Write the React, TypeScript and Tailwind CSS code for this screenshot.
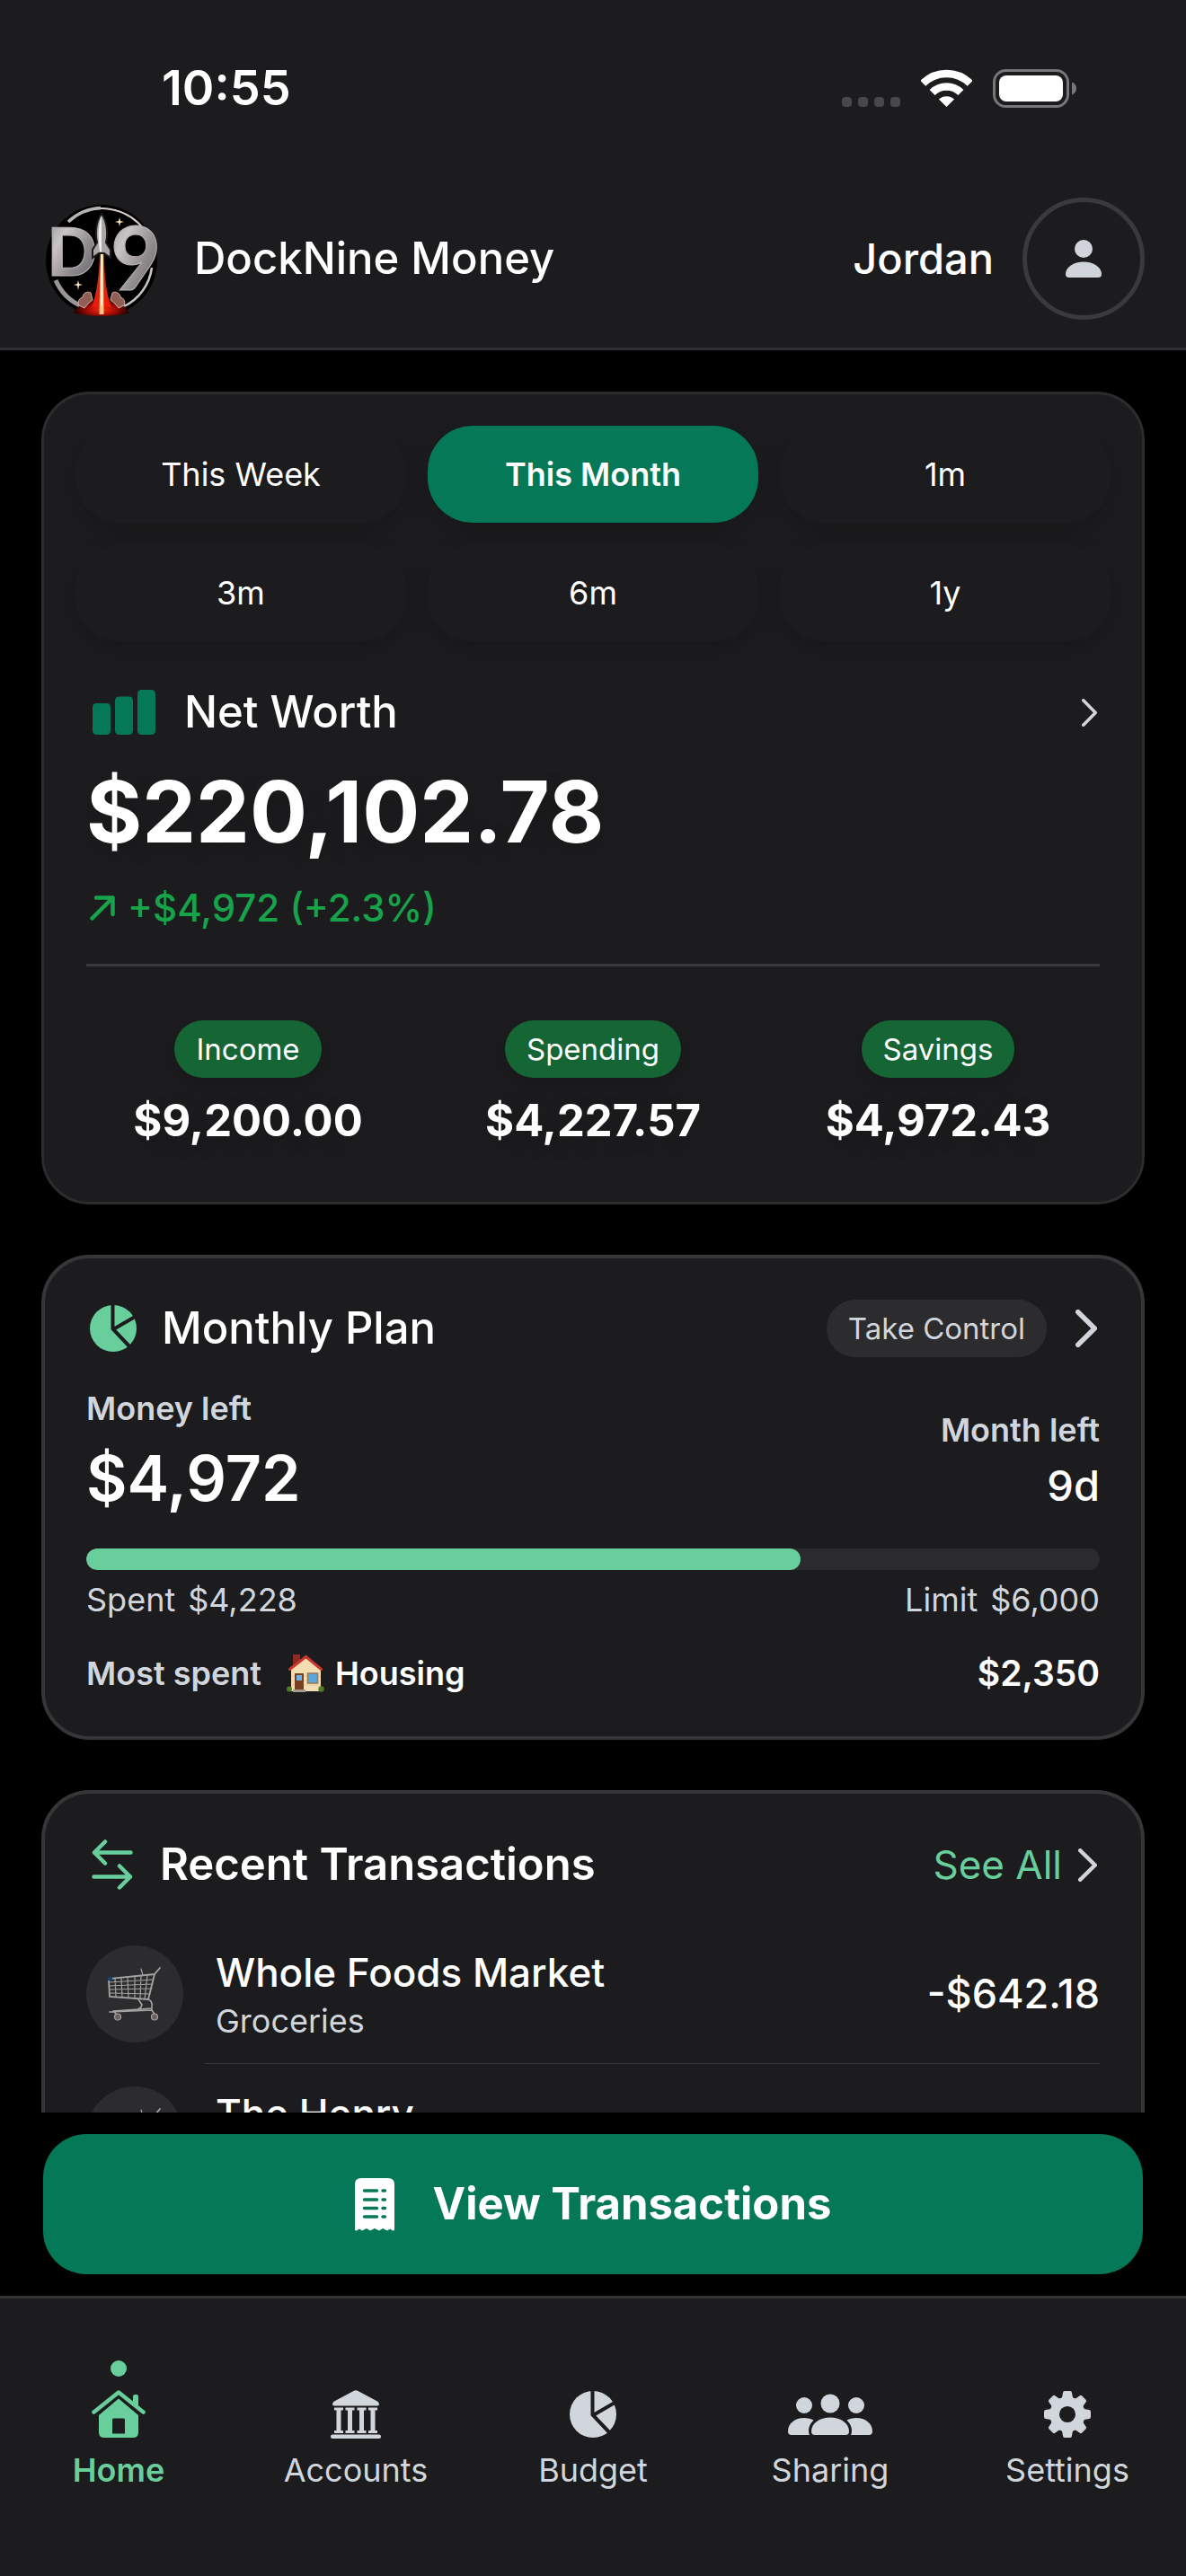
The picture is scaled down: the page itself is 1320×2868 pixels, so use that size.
import React, { useState } from 'react';

interface IconProps {
  className?: string;
}

interface Transaction {
  name: string;
  category?: string;
  amount?: string;
}

const WifiIcon: React.FC = () => (
  <svg width="57" height="43" viewBox="0 0 57 43" fill="none" stroke="#fff">
    <path d="M2.3 15.8A37 37 0 0 1 54.7 15.8" strokeWidth="8.5" />
    <path d="M12.6 26.1A22.5 22.5 0 0 1 44.4 26.1" strokeWidth="8.5" />
    <path d="M28.5 42L19.9 33.6A12.5 12.5 0 0 1 37.1 33.6Z" fill="#fff" stroke="none" />
  </svg>
);

const BatteryIcon: React.FC = () => (
  <svg width="93" height="43" viewBox="0 0 93 43" fill="none">
    <rect x="1.5" y="1.5" width="82" height="40" rx="13" stroke="#77777a" strokeWidth="3" />
    <rect x="7" y="7" width="71" height="29" rx="8" fill="#fff" />
    <path d="M88 14.5C91 15.5 93 18 93 21.5S91 27.5 88 28.5Z" fill="#77777a" />
  </svg>
);

const Logo: React.FC = () => (
  <svg width="132" height="132" viewBox="0 0 132 132" role="img" aria-label="DockNine logo">
    <defs>
      <linearGradient id="steel" x1="0" y1="0" x2="1" y2="1">
        <stop offset="0" stopColor="#8d8b8e" />
        <stop offset="0.3" stopColor="#c9c5c7" />
        <stop offset="0.6" stopColor="#8f8b8e" />
        <stop offset="1" stopColor="#5b585c" />
      </linearGradient>
      <linearGradient id="flame" x1="0" y1="0" x2="0" y2="1">
        <stop offset="0" stopColor="#5a1c12" />
        <stop offset="0.5" stopColor="#c92c14" />
        <stop offset="1" stopColor="#f01808" />
      </linearGradient>
      <radialGradient id="glow" cx="0.5" cy="0.7" r="0.5">
        <stop offset="0" stopColor="#ff2a0c" />
        <stop offset="0.5" stopColor="#a80c04" />
        <stop offset="1" stopColor="#200000" />
      </radialGradient>
    </defs>
    <circle cx="65" cy="68" r="62" fill="#000" />
    <path d="M28 24A58 58 0 0 1 114 36" fill="none" stroke="#d8d0cc" strokeWidth="2" />
    <path d="M28 25A57 57 0 0 1 64 9.500" fill="none" stroke="#b8b3b3" strokeWidth="3.500" />
    <path d="M14 90A56 56 0 0 0 43 119" fill="none" stroke="#9a9698" strokeWidth="5" />
    <path d="M121 76A56 56 0 0 1 90 119" fill="none" stroke="#c9c4c4" strokeWidth="2.500" />
    <text x="5" y="85" fontFamily="'Liberation Sans', sans-serif" fontWeight="700" fontSize="77" fill="url(#steel)" stroke="#b9b4b4" strokeWidth="1">D</text>
    <text x="75" y="101" fontFamily="Lato, sans-serif" fontWeight="700" fontSize="97" fill="url(#steel)" stroke="#b9b4b4" strokeWidth="1">9</text>
    <path d="M59 60C60 90 52 112 40 126H91C78 112 71 90 72 60Z" fill="#000" />
    <path d="M34 126C45 110 56 116 65 106C74 116 85 110 96 126C86 131 44 131 34 126Z" fill="url(#glow)" />
    <path d="M63 58C62 86 60 104 54 120H76C70 104 68 86 68 58Z" fill="url(#flame)" />
    <path d="M40 118a6 6 0 0 1 4-9a6 6 0 0 1 9-5l2 8-5 4-4 5ZM90 118a6 6 0 0 0-4-9a6 6 0 0 0-9-5l-2 8 5 4 4 5Z" fill="#8f5f55" stroke="#d6b0a4" strokeWidth="1" />
    <path d="M64 58H67L67.500 128H62.500Z" fill="#ffc58a" />
    <path d="M64.500 55H66V118H64.500Z" fill="#fff" />
    <path d="M65 16C58 26 58 40 60 48L55 56V65L62 60H68L75 65V56L70 48C72 40 72 26 65 16Z" fill="#aaa6a8" stroke="#1c1a1c" strokeWidth="2" />
    <path d="M65 18C61 28 61 44 63 58H65Z" fill="#efecec" />
    <path d="M85 20L86 24L90 25L86 26L85 30L84 26L80 25L84 24ZM39 90L40 94L44 95L40 96L39 101L38 96L34 95L38 94Z" fill="#ffe2c4" />
  </svg>
);

const PersonIcon: React.FC = () => (
  <svg width="40" height="42" viewBox="0 0 40 42" fill="#d1d5db">
    <circle cx="20" cy="10" r="10" />
    <path d="M0 38C0 30.500 9 24.500 20 24.500S40 30.500 40 38C40 41 38.500 42 36 42H4C1.500 42 0 41 0 38Z" />
  </svg>
);

const BarsIcon: React.FC = () => (
  <svg width="70" height="50" viewBox="0 0 70 50" fill="#047857">
    <rect x="0" y="15" width="20" height="35" rx="4.500" />
    <rect x="25" y="7.500" width="20" height="42.500" rx="4.500" />
    <rect x="50" y="0" width="20" height="50" rx="4.500" />
  </svg>
);

const TrendIcon: React.FC = () => (
  <svg width="28" height="28" viewBox="0 0 28 28" fill="none" stroke="#16a34a" strokeWidth="4.500" strokeLinecap="round" strokeLinejoin="round">
    <path d="M2.500 25.500L25.500 2.500M7 2.500H25.500V21" />
  </svg>
);

const PieIcon: React.FC<IconProps> = ({ className }) => (
  <svg width="52" height="52" viewBox="0 0 52 52" className={className}>
    <circle cx="26" cy="26" r="26" fill="currentColor" />
    <path d="M25.500 0V26.500L45 47M27 26.500L52 12" fill="none" stroke="#1c1c1e" strokeWidth="4" />
  </svg>
);

const SwapIcon: React.FC = () => (
  <svg width="46" height="56" viewBox="0 0 46 56" fill="none" stroke="#68ce9b" strokeWidth="4.500" strokeLinecap="round" strokeLinejoin="round">
    <path d="M43.500 14.500H3M15 2.500L3 14.500L15 26.500M2.500 41.500H43M31 29.500L43 41.500L31 53.500" />
  </svg>
);

const ReceiptIcon: React.FC = () => (
  <svg width="44" height="59" viewBox="0 0 44 59">
    <path d="M0 7Q0 0 7 0H37Q44 0 44 7V57Q44 59 42 58.500L39 56.500L36 58.500L31 56L27 58.500L22 56L17 58.500L13 56L8 58.500L5 56.500L2 58.500Q0 59 0 57Z" fill="#fff" />
    <path d="M10.500 14H24.500M10.500 24H24.500M10.500 33.500H24.500M10.500 43H24.500M31 14H33.500M31 24H33.500M31 33.500H33.500M31 43H33.500" stroke="#047857" strokeWidth="3.500" strokeLinecap="round" />
  </svg>
);

const Chevron: React.FC<{ width: number; height: number; stroke: number }> = ({ width, height, stroke }) => (
  <svg width={width} height={height} fill="none" stroke="#d1d5db" strokeWidth={stroke} strokeLinecap="round" strokeLinejoin="round">
    <path d={`M${stroke / 2} ${stroke / 2}L${width - stroke / 2} ${height / 2}L${stroke / 2} ${height - stroke / 2}`} />
  </svg>
);

const HouseEmoji: React.FC = () => (
  <svg width="42" height="42" viewBox="0 0 42 42">
    <rect x="7" y="0" width="8" height="12" fill="#8f2a20" />
    <path d="M5 16L21 3L38 16V41H5Z" fill="#f3deb4" />
    <path d="M5 24H38M5 29H38M5 34H38" stroke="#e2c998" strokeWidth="0.800" />
    <path d="M3.500 16.500L21.500 2.500L38.500 16.500" fill="none" stroke="#c9362c" strokeWidth="3" strokeLinecap="round" />
    <rect x="9" y="21" width="10" height="19" fill="#7a3f22" />
    <rect x="11" y="23" width="6" height="6" fill="#6db5e8" />
    <rect x="23.500" y="21" width="11" height="11" fill="#5aa7e0" stroke="#9b7a58" strokeWidth="1.600" />
    <rect x="7" y="39" width="14" height="3" fill="#a59a8e" />
    <circle cx="3" cy="38.500" r="3" fill="#4f7d26" />
    <circle cx="38.500" cy="38.500" r="3.200" fill="#4f7d26" />
  </svg>
);

const CartEmoji: React.FC = () => (
  <svg width="60" height="60" viewBox="0 0 60 60" fill="none" stroke="#a3a3a3" strokeWidth="1.200" strokeLinecap="round">
    <path d="M58 1L52 8L45 36L2 33L1 13L52 8" strokeWidth="1.800" />
    <path d="M1 17L51 14M1 21L50 19M2 25L49 24M2 29L47 30M8 12L9 33M15 12L16 34M22 11L23 34M30 11L30 35M37 10L36 35M44 9L41 36M37 2L39 9" />
    <path d="M34 36L38 42Q37 47 30 48M45 36Q50 38 49 44V48L2 50M6 49L49 46M49 48L53 54M7 50L11 54" strokeWidth="1.600" />
    <rect x="0" y="11" width="5" height="4" fill="#1d4168" stroke="none" />
    <circle cx="11" cy="55.500" r="3.500" fill="#6b625c" />
    <circle cx="52" cy="55.500" r="3.500" fill="#6b625c" />
  </svg>
);

const HomeIcon: React.FC = () => (
  <svg width="60" height="54" viewBox="0 0 60 54" fill="currentColor">
    <path d="M2.500 24.500L30 2.500L57.500 24.500" fill="none" stroke="currentColor" strokeWidth="4.500" strokeLinecap="round" strokeLinejoin="round" />
    <path d="M46 14V7Q46 5 48 5H50Q52 5 52 7V20Z" />
    <path fillRule="evenodd" d="M30 9.500L52 28V47Q52 53 46 53H14Q8 53 8 47V28ZM23 33V48.500H37V33Q37 31.500 35.500 31.500H24.500Q23 31.500 23 33Z" />
  </svg>
);

const BankIcon: React.FC = () => (
  <svg width="56" height="54" viewBox="0 0 56 54" fill="currentColor">
    <path d="M26 0.800Q28 -0.400 30 0.800L52 12.500Q54 14 54 15.500Q54 17.500 52 17.500H4Q2 17.500 2 15.500Q2 14 4 12.500Z" />
    {[9, 21.5, 34.5, 47].map((x) => (
      <path key={x} d={`M${x - 5} 19.500H${x + 5}V22.500H${x + 2.5}V45H${x + 5}V48H${x - 5}V45H${x - 2.5}V22.500H${x - 5}Z`} />
    ))}
    <rect x="0" y="49.500" width="56" height="4.500" rx="2" />
  </svg>
);

const PeopleIcon: React.FC = () => (
  <svg width="94" height="46" viewBox="0 0 94 46" fill="currentColor">
    <circle cx="47" cy="11" r="10.500" />
    <circle cx="18" cy="13" r="9" />
    <circle cx="76" cy="13" r="9" />
    <path d="M0 42C0 33 8 27 18 27C22 27 26 28 28.500 29.500C25 33 23 37 23 41Q23 44 24 46H4Q0 46 0 42ZM94 42C94 33 86 27 76 27C72 27 68 28 65.500 29.500C69 33 71 37 71 41Q71 44 70 46H90Q94 46 94 42Z" />
    <path d="M26 42C26 33 35 26.500 47 26.500S68 33 68 42Q68 46 64 46H30Q26 46 26 42Z" />
  </svg>
);

const GearIcon: React.FC = () => (
  <svg width="52" height="52" viewBox="-26 -26 52 52" fill="currentColor">
    {[0, 45, 90, 135, 180, 225, 270, 315].map((angle) => (
      <path key={angle} transform={`rotate(${angle})`} d="M-7 -17Q-5.500 -19 -5 -24Q-4.800 -26 -3 -26H3Q4.800 -26 5 -24Q5.500 -19 7 -17Z" />
    ))}
    <circle r="14.300" fill="none" stroke="currentColor" strokeWidth="10.500" />
  </svg>
);

const ranges = ['This Week', 'This Month', '1m', '3m', '6m', '1y'];

const stats = [
  { label: 'Income', value: '$9,200.00' },
  { label: 'Spending', value: '$4,227.57' },
  { label: 'Savings', value: '$4,972.43' },
];

const transactions: Transaction[] = [
  { name: 'Whole Foods Market', category: 'Groceries', amount: '-$642.18' },
  { name: 'The Henry' },
];

const tabs = [
  { label: 'Home', icon: <HomeIcon /> },
  { label: 'Accounts', icon: <BankIcon /> },
  { label: 'Budget', icon: <PieIcon /> },
  { label: 'Sharing', icon: <PeopleIcon /> },
  { label: 'Settings', icon: <GearIcon /> },
];

const StatusBar: React.FC = () => (
  <div className="flex h-[196px] items-center justify-between pr-[122px] pl-[180px]">
    <span className="text-[54px] leading-[60px] font-semibold">10:55</span>
    <div className="flex items-end gap-[23px]">
      <div className="flex gap-[7px] pb-px">
        {[0, 1, 2, 3].map((dot) => (
          <span key={dot} className="h-[11px] w-[11px] rounded-[4px] bg-[#48484a]" />
        ))}
      </div>
      <WifiIcon />
      <BatteryIcon />
    </div>
  </div>
);

const Header: React.FC = () => (
  <header className="border-b-[3px] border-[#303032] bg-[#1c1c1e]">
    <StatusBar />
    <div className="flex items-center justify-between pt-6 pr-[46px] pb-[31px] pl-12">
      <div className="flex items-center gap-9">
        <Logo />
        <h1 className="text-[49px] leading-[60px] font-medium">DockNine Money</h1>
      </div>
      <div className="flex items-center gap-8">
        <span className="text-[47px] leading-[60px] font-medium">Jordan</span>
        <button aria-label="Profile" className="flex h-[136px] w-[136px] items-center justify-center rounded-full border-[5px] border-[#3a3a3c]">
          <PersonIcon />
        </button>
      </div>
    </div>
  </header>
);

const NetWorthCard: React.FC = () => {
  const [range, setRange] = useState('This Month');

  return (
    <section className="rounded-[54px] border-[3px] border-[#2c2c2e] bg-[#1c1c1e] px-[35px] pt-[35px] pb-[60px]">
      <div className="grid grid-cols-3 gap-6">
        {ranges.map((item) => (
          <button
            key={item}
            onClick={() => setRange(item)}
            className={`h-[108px] rounded-[50px] text-[36px] leading-[44px] shadow-[0_8px_24px_rgba(0,0,0,0.16)] ${
              item === range ? 'bg-[#047857] font-semibold' : 'bg-[#1c1c1e]'
            }`}
          >
            {item}
          </button>
        ))}
      </div>
      <div className="px-3">
        <div className="mt-[49px] flex items-center justify-between pr-[3px] pl-[7px]">
          <div className="flex items-center gap-8">
            <BarsIcon />
            <h2 className="text-[49px] leading-[60px] font-medium">Net Worth</h2>
          </div>
          <Chevron width={17} height={31} stroke={3.5} />
        </div>
        <p className="mt-[31px] text-[95px] leading-[100px] font-bold [text-shadow:0_8px_24px_rgba(0,0,0,0.16)]">$220,102.78</p>
        <div className="mt-[33px] flex items-center gap-[14px] pl-1">
          <TrendIcon />
          <span className="text-[42px] leading-[48px] font-medium text-[#16a34a]">+$4,972 (+2.3%)</span>
        </div>
        <div className="mt-[38px] h-[3px] bg-[#3a3a3c]" />
        <div className="mt-[60px] grid grid-cols-3 gap-6">
          {stats.map(({ label, value }) => (
            <div key={label} className="flex flex-col items-center">
              <span className="rounded-[32px] bg-[#166534] px-6 text-[33px] leading-[64px] shadow-[0_8px_24px_rgba(0,0,0,0.16)]">{label}</span>
              <span className="mt-[18px] text-[49px] leading-[60px] font-bold [text-shadow:0_8px_24px_rgba(0,0,0,0.16)]">{value}</span>
            </div>
          ))}
        </div>
      </div>
    </section>
  );
};

const MonthlyPlanCard: React.FC = () => {
  const spent = 4228;
  const limit = 6000;

  return (
    <section className="rounded-[54px] border-4 border-[#363638] bg-[#1c1c1e] px-[46px] pt-[46px] pb-12">
      <div className="flex items-center justify-between pr-[3px] pl-1">
        <div className="flex items-center gap-7">
          <PieIcon className="text-[#68ce9b]" />
          <h2 className="text-[49px] leading-[60px] font-medium">Monthly Plan</h2>
        </div>
        <div className="flex items-center gap-8">
          <button className="rounded-[32px] bg-[#2c2c2e] px-6 text-[33px] leading-[64px] text-gray-300">Take Control</button>
          <Chevron width={24} height={42} stroke={5.5} />
        </div>
      </div>
      <div className="mt-[35px] flex items-end justify-between">
        <div>
          <p className="text-[36px] leading-[44px] font-semibold text-gray-300">Money left</p>
          <p className="mt-4 text-[70px] leading-[80px] font-semibold">$4,972</p>
        </div>
        <div className="text-right">
          <p className="text-[36px] leading-[44px] font-semibold text-gray-300">Month left</p>
          <p className="mt-2 text-[47px] leading-[64px] font-medium">9d</p>
        </div>
      </div>
      <div
        role="progressbar"
        aria-label="Monthly spending"
        aria-valuenow={spent}
        aria-valuemax={limit}
        className="mt-[38px] h-6 overflow-hidden rounded-full bg-[#2c2c2e]"
      >
        <div className="h-full rounded-full bg-[#68ce9b]" style={{ width: `${(spent / limit) * 100}%` }} />
      </div>
      <div className="mt-[11px] flex justify-between text-[36px] leading-[44px] text-gray-300">
        <p className="flex gap-[14px]">
          <span>Spent</span>
          <span>$4,228</span>
        </p>
        <p className="flex gap-[14px]">
          <span>Limit</span>
          <span>$6,000</span>
        </p>
      </div>
      <div className="mt-[38px] flex items-center justify-between leading-[44px]">
        <div className="flex items-center text-[36px] font-semibold">
          <span className="text-gray-300">Most spent</span>
          <span className="ml-7 flex items-center gap-3">
            <HouseEmoji />
            Housing
          </span>
        </div>
        <span className="text-[39px] font-semibold">$2,350</span>
      </div>
    </section>
  );
};

const TransactionsCard: React.FC = () => (
  <section className="rounded-[54px] border-4 border-[#363638] bg-[#1c1c1e] px-[46px] pt-[49px] pb-12">
    <div className="flex items-center justify-between pr-[3px] pl-[6px]">
      <div className="flex items-center gap-[30px]">
        <SwapIcon />
        <h2 className="text-[49px] leading-[60px] font-semibold">Recent Transactions</h2>
      </div>
      <a href="#transactions" className="flex items-center gap-[18px] text-[44px] leading-[60px] text-[#68ce9b]">
        See All
        <Chevron width={21} height={37} stroke={4.5} />
      </a>
    </div>
    <ul className="mt-[60px]">
      {transactions.map(({ name, category, amount }) => (
        <li key={name}>
          <div className="flex items-center">
            <div className="flex h-[108px] w-[108px] items-center justify-center rounded-full bg-[#2c2c2e]">
              <CartEmoji />
            </div>
            <div className="ml-9 flex flex-1 flex-col gap-1 self-start pt-0.5">
              <span className="text-[44px] leading-[56px] font-medium">{name}</span>
              {category && <span className="text-[36px] leading-[44px] text-gray-300">{category}</span>}
            </div>
            {amount && <span className="text-[45px] leading-[56px] font-medium">{amount}</span>}
          </div>
          <div className="mt-[23px] mb-[25px] ml-[132px] h-px bg-[#3a3a3c]" />
        </li>
      ))}
    </ul>
  </section>
);

const TabBar: React.FC = () => {
  const [active, setActive] = useState('Home');

  return (
    <nav className="grid h-[312px] shrink-0 grid-cols-5 border-t-[3px] border-[#343436] bg-[#1c1c1e] pt-[69px]">
      {tabs.map(({ label, icon }) => (
        <button
          key={label}
          onClick={() => setActive(label)}
          className={`flex flex-col items-center self-start text-[36px] leading-[44px] ${
            label === active ? 'font-semibold text-[#68ce9b]' : 'text-gray-300'
          }`}
        >
          <span className={`h-[18px] w-[18px] rounded-full ${label === active ? 'bg-[#68ce9b]' : ''}`} />
          <span className="mt-[14px] flex h-[56px] items-center">{icon}</span>
          <span className="mt-3">{label}</span>
        </button>
      ))}
    </nav>
  );
};

const App: React.FC = () => {
  return (
    <div className="flex h-screen flex-col bg-black font-['Inter',sans-serif] text-white">
      <Header />
      <main className="flex min-h-0 flex-1 flex-col gap-14 overflow-y-auto px-[46px] pt-[46px] [scrollbar-width:none]">
        <NetWorthCard />
        <MonthlyPlanCard />
        <TransactionsCard />
      </main>
      <div className="px-12 py-6">
        <button className="flex h-[156px] w-full items-center justify-center gap-[43px] rounded-[48px] bg-[#047857] text-[49px] leading-[60px] font-bold">
          <ReceiptIcon />
          View Transactions
        </button>
      </div>
      <TabBar />
    </div>
  );
};

export default App;
